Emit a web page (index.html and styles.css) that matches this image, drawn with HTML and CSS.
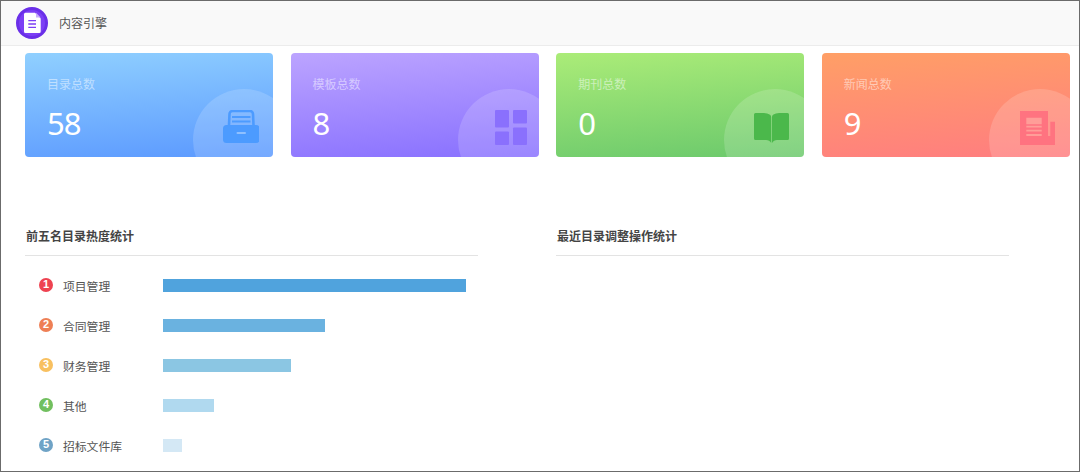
FILE: index.html
```html
<!DOCTYPE html>
<html lang="zh">
<head>
<meta charset="utf-8">
<title>内容引擎</title>
<link rel="stylesheet" href="styles.css">
</head>
<body>
<div class="frame">
  <header class="topbar">
    <span class="logo">
      <svg viewBox="0 0 32 32" width="32" height="32">
        <circle cx="16" cy="16" r="14.5" fill="#7c3ff5" stroke="#6a2fe8" stroke-width="3"/>
        <path d="M9.500 5.700h9.500l5.700 5.700v13a1.500 1.500 0 0 1-1.500 1.500h-13.700a1.500 1.500 0 0 1-1.500-1.500v-17.200a1.500 1.500 0 0 1 1.500-1.500z" fill="#fff"/>
        <path d="M20 5.700l4.700 4.700h-4.700z" fill="#c9aefb"/>
        <path d="M12.300 13.700h7.700M12.300 17h7.700M12.300 20.300h7.700" stroke="#7c3ff5" stroke-width="1.300"/>
      </svg>
    </span>
    <span class="app-name">内容引擎</span>
  </header>

  <main class="content">
    <section class="cards">
      <article class="card card-blue">
        <div class="card-label">目录总数</div>
        <div class="card-value">58</div>
        <span class="card-disc"></span>
        <svg class="card-icon" viewBox="0 0 36.500 33" width="36.500" height="33">
          <path d="M6 15L6.500 4a3 3 0 0 1 3-3h17.500a3 3 0 0 1 3 3L30.500 15" fill="none" stroke="#4c9bff" stroke-width="2.600"/>
          <path d="M9 7h18.500M9 11.500h18.500" stroke="#4c9bff" stroke-width="2"/>
          <rect x="0" y="15" width="36.500" height="18" rx="3.500" fill="#4c9bff"/>
          <rect x="13.500" y="22" width="9.500" height="2" rx="1" fill="#8fc0ff"/>
        </svg>
      </article>
      <article class="card card-purple">
        <div class="card-label">模板总数</div>
        <div class="card-value">8</div>
        <span class="card-disc"></span>
        <svg class="card-icon" viewBox="0 0 32 35" width="32" height="35">
          <rect x="0" y="0" width="14" height="17.500" rx="1" fill="#8a70fd"/>
          <rect x="18" y="0" width="14" height="13.500" rx="1" fill="#8a70fd"/>
          <rect x="0" y="21.500" width="14" height="13.500" rx="1" fill="#8a70fd"/>
          <rect x="18" y="17.500" width="14" height="17.500" rx="1" fill="#8a70fd"/>
        </svg>
      </article>
      <article class="card card-green">
        <div class="card-label">期刊总数</div>
        <div class="card-value">0</div>
        <span class="card-disc"></span>
        <svg class="card-icon" viewBox="0 0 35 30" width="35" height="30">
          <path d="M1.500 0H8c5 0 9 1 9.200 4v26c-1-2-3-3-5-3H1.500A1.500 1.500 0 0 1 0 25.500V1.500A1.500 1.500 0 0 1 1.500 0z" fill="#4bb84b"/>
          <path d="M33.500 0H27c-5 0-8.800 1-9 4v26c1-2 3-3 5-3h10.500a1.500 1.500 0 0 0 1.500-1.500V1.500A1.500 1.500 0 0 0 33.500 0z" fill="#4bb84b"/>
        </svg>
      </article>
      <article class="card card-red">
        <div class="card-label">新闻总数</div>
        <div class="card-value">9</div>
        <span class="card-disc"></span>
        <svg class="card-icon" viewBox="0 0 35 34" width="35" height="34">
          <path d="M0 0h28v25h2.300V10.700H35V34H0z" fill="#ff7380"/>
          <path d="M6.300 6.700h15.400v6.600H6.300z" fill="#ff9d98"/>
          <path d="M6.300 15.700h15.400M6.300 19.700h15.400M6.300 24h15.400" stroke="#ff9d98" stroke-width="1.800"/>
        </svg>
      </article>
    </section>

    <section class="stats">
      <div class="panel">
        <h2 class="panel-title">前五名目录热度统计</h2>
        <ul class="rank-list">
          <li class="rank-row">
            <span class="rank-dot dot-1">1</span>
            <span class="rank-name">项目管理</span>
            <span class="rank-bar bar-1" style="width:303px"></span>
          </li>
          <li class="rank-row">
            <span class="rank-dot dot-2">2</span>
            <span class="rank-name">合同管理</span>
            <span class="rank-bar bar-2" style="width:162px"></span>
          </li>
          <li class="rank-row">
            <span class="rank-dot dot-3">3</span>
            <span class="rank-name">财务管理</span>
            <span class="rank-bar bar-3" style="width:128px"></span>
          </li>
          <li class="rank-row">
            <span class="rank-dot dot-4">4</span>
            <span class="rank-name">其他</span>
            <span class="rank-bar bar-4" style="width:51px"></span>
          </li>
          <li class="rank-row">
            <span class="rank-dot dot-5">5</span>
            <span class="rank-name">招标文件库</span>
            <span class="rank-bar bar-5" style="width:19px"></span>
          </li>
        </ul>
      </div>
      <div class="panel">
        <h2 class="panel-title">最近目录调整操作统计</h2>
      </div>
    </section>
  </main>
</div>
</body>
</html>
```

FILE: styles.css
```css
* {
  box-sizing: border-box;
}

html,
body {
  margin: 0;
  padding: 0;
  height: 472px;
  overflow: hidden;
  background: #fff;
}

body {
  font-family: "Noto Sans CJK SC", "Noto Sans", sans-serif;
  color: #555;
}

.frame {
  height: 472px;
  border: 1px solid #6b6b6b;
  overflow: hidden;
  display: flex;
  flex-direction: column;
}

.topbar {
  height: 45px;
  flex: none;
  display: flex;
  align-items: center;
  gap: 11px;
  padding: 0 0 0 15px;
  background: #f9f9f9;
  border-bottom: 1px solid #ececec;
}

.logo {
  width: 32px;
  height: 32px;
  display: block;
}

.logo svg {
  display: block;
}

.app-name {
  font-size: 12px;
  line-height: 16px;
  color: #555;
}

.content {
  flex: 1;
  padding: 7px 9px 0 24px;
}

.cards {
  display: grid;
  grid-template-columns: repeat(4, 248px);
  column-gap: 17.600px;
}

.card {
  position: relative;
  height: 104px;
  border-radius: 4px;
  overflow: hidden;
  padding: 21px 22px 0;
  color: #fff;
}

.card-blue {
  background: linear-gradient(175deg, #90d0ff, #5b99ff);
}

.card-purple {
  background: linear-gradient(175deg, #bca4ff, #8870ff);
}

.card-green {
  background: linear-gradient(175deg, #abec78, #6bc96c);
}

.card-red {
  background: linear-gradient(175deg, #ff9f66, #ff7d80);
}

.card-label {
  font-size: 12px;
  line-height: 20px;
  color: rgba(255, 255, 255, 0.5);
}

.card-value {
  font-family: "Noto Sans", sans-serif;
  font-size: 31px;
  line-height: 40px;
  letter-spacing: -1px;
  margin-top: 9px;
}

.card-disc {
  position: absolute;
  left: 167.500px;
  top: 36px;
  width: 102px;
  height: 102px;
  border-radius: 50%;
  background: rgba(255, 255, 255, 0.16);
}

.card-icon {
  position: absolute;
  right: 14px;
  top: 57px;
}

.card-purple .card-icon {
  right: 12px;
}

.card-green .card-icon {
  right: 15px;
  top: 60px;
}

.card-red .card-icon {
  right: 15px;
  top: 58px;
}

.stats {
  display: flex;
  gap: 78px;
  margin-top: 65px;
}

.panel {
  width: 453px;
}

.panel-title {
  margin: 0;
  height: 34px;
  padding: 5px 0 0 1px;
  font-size: 12px;
  line-height: 18px;
  font-weight: 700;
  color: #444;
  border-bottom: 1px solid #e3e3e3;
}

.rank-list {
  list-style: none;
  margin: 0;
  padding: 0;
}

.rank-row {
  display: flex;
  align-items: center;
  height: 40px;
  padding-left: 14px;
}

.rank-row:first-child {
  margin-top: 10px;
}

.rank-dot {
  width: 14px;
  height: 14px;
  flex: none;
  border-radius: 50%;
  color: #fff;
  font-family: "Liberation Sans", sans-serif;
  font-size: 11px;
  font-weight: 700;
  line-height: 13px;
  text-align: center;
  margin-top: -2px;
}

.dot-1 {
  background: #ee4250;
}

.dot-2 {
  background: #ee7f55;
}

.dot-3 {
  background: #f8c060;
}

.dot-4 {
  background: #71bf5f;
}

.dot-5 {
  background: #6fa3c6;
}

.rank-name {
  width: 100px;
  flex: none;
  margin-left: 10px;
  font-size: 11.800px;
  line-height: 16px;
  color: #555;
}

.rank-bar {
  display: block;
  height: 13px;
  margin-top: -2px;
}

.bar-1 {
  background: #50a3dd;
}

.bar-2 {
  background: #6ab2e0;
}

.bar-3 {
  background: #8bc6e3;
}

.bar-4 {
  background: #b0d9ef;
}

.bar-5 {
  background: #d4e8f5;
}
```
